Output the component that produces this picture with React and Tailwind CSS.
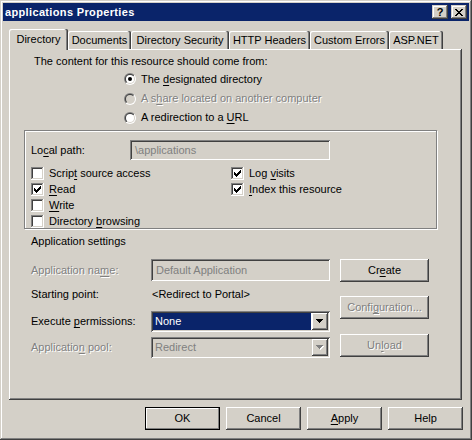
import React, { useId } from "react";

const RAISED =
  "shadow-[inset_-1px_-1px_#404040,inset_1px_1px_#ffffff,inset_-2px_-2px_#808080,inset_2px_2px_#d4d0c8]";
const SUNKEN =
  "shadow-[inset_1px_1px_#808080,inset_-1px_-1px_#ffffff,inset_2px_2px_#404040,inset_-2px_-2px_#d4d0c8]";
const DIS = "text-[#808080] [text-shadow:1px_1px_0_#ffffff]";

function U({ children }) {
  return <span className="underline decoration-1 underline-offset-[2px]">{children}</span>;
}

function CheckBox({ checked }) {
  const cols = [
    [3, 5],
    [4, 6],
    [5, 7],
    [6, 6],
    [7, 5],
    [8, 4],
    [9, 3],
  ];
  return (
    <svg width="13" height="13" className="block shrink-0" shapeRendering="crispEdges">
      <rect x="0" y="0" width="13" height="13" fill="#ffffff" />
      <rect x="0" y="0" width="12" height="12" fill="#808080" />
      <rect x="1" y="1" width="11" height="11" fill="#d4d0c8" />
      <rect x="1" y="1" width="10" height="10" fill="#404040" />
      <rect x="2" y="2" width="9" height="9" fill="#ffffff" />
      {checked &&
        cols.map(([x, y]) => <rect key={x} x={x} y={y} width="1" height="3" fill="#000000" />)}
    </svg>
  );
}

function Radio({ checked, disabled }) {
  const id = useId().replace(/[^a-zA-Z0-9]/g, "");
  return (
    <svg width="12" height="12" viewBox="0 0 12 12" className="block shrink-0">
      <defs>
        <linearGradient id={id + "a"} x1="0" y1="0" x2="1" y2="1">
          <stop offset="0.5" stopColor="#808080" />
          <stop offset="0.5" stopColor="#ffffff" />
        </linearGradient>
        <linearGradient id={id + "b"} x1="0" y1="0" x2="1" y2="1">
          <stop offset="0.5" stopColor="#404040" />
          <stop offset="0.5" stopColor="#d4d0c8" />
        </linearGradient>
      </defs>
      <circle cx="6" cy="6" r="6" fill={`url(#${id}a)`} />
      <circle cx="6" cy="6" r="5" fill={`url(#${id}b)`} />
      <circle cx="6" cy="6" r="4" fill={disabled ? "#d4d0c8" : "#ffffff"} />
      {checked && <circle cx="6" cy="6" r="2" fill="#000000" />}
    </svg>
  );
}

function Arrow({ disabled }) {
  const rows = [
    [0, 7],
    [1, 5],
    [2, 3],
    [3, 1],
  ];
  return (
    <svg width="8" height="5" className="block" shapeRendering="crispEdges">
      {disabled &&
        rows.map(([y, w], i) => (
          <rect key={"s" + i} x={i + 1} y={y + 1} width={w} height="1" fill="#ffffff" />
        ))}
      {rows.map(([y, w], i) => (
        <rect key={i} x={i} y={y} width={w} height="1" fill={disabled ? "#808080" : "#000000"} />
      ))}
    </svg>
  );
}

function Tab({ selected, className, children }) {
  if (selected)
    return (
      <div
        className={`${className} h-[21px] -mb-[1px] relative z-10 bg-[#d4d0c8] flex items-center justify-center pb-[1px] rounded-t-[2px] shadow-[inset_-1px_0_#404040,inset_-2px_0_#808080,inset_1px_1px_#ffffff]`}
      >
        {children}
      </div>
    );
  return (
    <div
      className={`${className} h-[18px] flex items-center justify-center pt-[1px] rounded-t-[2px] shadow-[inset_-1px_0_#404040,inset_-2px_0_#808080,inset_1px_1px_#ffffff]`}
    >
      {children}
    </div>
  );
}

function Btn({ className, def, disabled, children }) {
  const sh = def
    ? "shadow-[inset_0_0_0_1px_#000000,inset_-2px_-2px_#808080,inset_2px_2px_#ffffff]"
    : RAISED;
  return (
    <div
      className={`${className} h-[23px] bg-[#d4d0c8] ${sh} flex items-center justify-center ${
        disabled ? DIS : ""
      }`}
    >
      {children}
    </div>
  );
}

function TextBox({ className, children }) {
  return (
    <div className={`${className} bg-[#d4d0c8] ${SUNKEN} flex items-center pl-[5px] text-[#808080]`}>
      {children}
    </div>
  );
}

function Select({ className, disabled, children }) {
  return (
    <div className={`${className} ${SUNKEN} ${disabled ? "bg-[#d4d0c8]" : "bg-white"} flex p-[2px]`}>
      <div
        className={`flex-1 flex items-center pl-[2px] ${
          disabled ? "text-[#808080]" : "bg-[#0a246a] text-white mr-[1px]"
        }`}
      >
        {children}
      </div>
      <div className={`w-[16px] bg-[#d4d0c8] ${RAISED} flex items-center justify-center`}>
        <Arrow disabled={disabled} />
      </div>
    </div>
  );
}

function CapBtn({ children }) {
  return (
    <div
      className={`w-[16px] h-[14px] bg-[#d4d0c8] shadow-[inset_-1px_-1px_#404040,inset_1px_1px_#d4d0c8,inset_-2px_-2px_#808080,inset_2px_2px_#ffffff] flex items-center justify-center`}
    >
      {children}
    </div>
  );
}

function CheckRow({ checked, children }) {
  return (
    <div className="h-[16px] flex items-center gap-[5px]">
      <CheckBox checked={checked} />
      <span>{children}</span>
    </div>
  );
}

export default function App() {
  const xPix = [
    [0, 0], [1, 0], [6, 0], [7, 0],
    [1, 1], [2, 1], [5, 1], [6, 1],
    [2, 2], [3, 2], [4, 2], [5, 2],
    [3, 3], [4, 3],
    [2, 4], [3, 4], [4, 4], [5, 4],
    [1, 5], [2, 5], [5, 5], [6, 5],
    [0, 6], [1, 6], [6, 6], [7, 6],
  ];
  return (
    <div className="w-[472px] h-[440px] bg-[#d4d0c8] p-[3px] flex flex-col text-[11px] leading-[13px] text-black [font-family:'Liberation_Sans',Arial,sans-serif] shadow-[inset_-1px_-1px_#404040,inset_1px_1px_#d4d0c8,inset_-2px_-2px_#808080,inset_2px_2px_#ffffff] select-none overflow-hidden">
      {/* caption */}
      <div className="h-[18px] shrink-0 bg-[#0a246a] flex items-center pl-[2px] pr-[2px]">
        <span className="text-white font-bold text-[11px] tracking-[0.35px]">applications Properties</span>
        <div className="ml-auto flex gap-[3px]">
          <CapBtn>
            <span className="font-bold text-[11px] leading-none text-black">?</span>
          </CapBtn>
          <CapBtn>
            <svg width="8" height="7" className="block" shapeRendering="crispEdges">
              {xPix.map(([x, y], i) => (
                <rect key={i} x={x} y={y} width="1" height="1" fill="#000000" />
              ))}
            </svg>
          </CapBtn>
        </div>
      </div>

      {/* tabs */}
      <div className="mt-[8px] h-[20px] shrink-0 flex items-end pl-[6px]">
        <Tab selected className="w-[59px]">Directory</Tab>
        <Tab className="w-[63px]">Documents</Tab>
        <Tab className="w-[98px]">Directory Security</Tab>
        <Tab className="w-[81px]">HTTP Headers</Tab>
        <Tab className="w-[79px]">Custom Errors</Tab>
        <Tab className="w-[54px]">ASP.NET</Tab>
      </div>

      {/* panel */}
      <div className="ml-[6px] w-[453px] h-[351px] shrink-0 flex flex-col shadow-[inset_-1px_-1px_#404040,inset_1px_1px_#ffffff,inset_-2px_-2px_#808080]">
        <div className="pl-[25px] pt-[6px]">The content for this resource should come from:</div>
        <div className="pl-[115px] mt-[1px] flex flex-col">
          <div className="h-[20px] flex items-center gap-[5px]">
            <Radio checked />
            <span>
              The <U>d</U>esignated directory
            </span>
          </div>
          <div className="h-[19px] flex items-center gap-[5px]">
            <Radio disabled />
            <span className={DIS}>
              A s<U>h</U>are located on another computer
            </span>
          </div>
          <div className="h-[19px] flex items-center gap-[5px]">
            <Radio />
            <span>
              A redirection to a <U>U</U>RL
            </span>
          </div>
        </div>

        {/* group frame */}
        <div className="ml-[15px] mt-[3px] w-[413px] h-[99px] border border-[#808080] shadow-[inset_1px_1px_#ffffff,1px_1px_#ffffff] pt-[9px] pl-[6px] flex flex-col">
          <div className="flex items-center h-[20px]">
            <span className="w-[99px]">
              Lo<U>c</U>al path:
            </span>
            <TextBox className="w-[200px] h-[20px]">\applications</TextBox>
          </div>
          <div className="mt-[5px] flex">
            <div className="w-[200px] flex flex-col">
              <CheckRow>
                Scrip<U>t</U> source access
              </CheckRow>
              <CheckRow checked>
                <U>R</U>ead
              </CheckRow>
              <CheckRow>
                <U>W</U>rite
              </CheckRow>
              <CheckRow>
                Directory <U>b</U>rowsing
              </CheckRow>
            </div>
            <div className="flex flex-col">
              <CheckRow checked>
                Log <U>v</U>isits
              </CheckRow>
              <CheckRow checked>
                <U>I</U>ndex this resource
              </CheckRow>
            </div>
          </div>
        </div>

        <div className="pl-[22px] mt-[6px]">Application settings</div>

        <div className="flex mt-[11px] pl-[22px]">
          <div className="w-[299px] flex flex-col">
            <div className="h-[22px] flex items-center">
              <span className={`w-[120px] ${DIS}`}>
                Application na<U>m</U>e:
              </span>
              <TextBox className="w-[179px] h-[22px]">Default Application</TextBox>
            </div>
            <div className="mt-[7px] h-[13px] flex items-center">
              <span className="w-[121px]">Starting point:</span>
              <span>&lt;Redirect to Portal&gt;</span>
            </div>
            <div className="mt-[10px] h-[21px] flex items-center">
              <span className="w-[120px]">
                Execute <U>p</U>ermissions:
              </span>
              <Select className="w-[179px] h-[21px]">None</Select>
            </div>
            <div className="mt-[5px] h-[21px] flex items-center">
              <span className={`w-[120px] ${DIS}`}>
                Applicatio<U>n</U> pool:
              </span>
              <Select disabled className="w-[179px] h-[21px]">
                Redirect
              </Select>
            </div>
          </div>
          <div className="ml-[10px] w-[89px] flex flex-col">
            <Btn className="w-[89px]">
              Cr<U>e</U>ate
            </Btn>
            <Btn disabled className="w-[89px] mt-[14px]">
              Confi<U>g</U>uration...
            </Btn>
            <Btn disabled className="w-[89px] mt-[15px]">
              Un<U>l</U>oad
            </Btn>
          </div>
        </div>
      </div>

      {/* dialog buttons */}
      <div className="mt-[7px] flex justify-end gap-[6px] pr-[6px]">
        <Btn def className="w-[75px]">
          OK
        </Btn>
        <Btn className="w-[75px]">Cancel</Btn>
        <Btn className="w-[75px]">
          <U>A</U>pply
        </Btn>
        <Btn className="w-[75px]">Help</Btn>
      </div>
    </div>
  );
}
